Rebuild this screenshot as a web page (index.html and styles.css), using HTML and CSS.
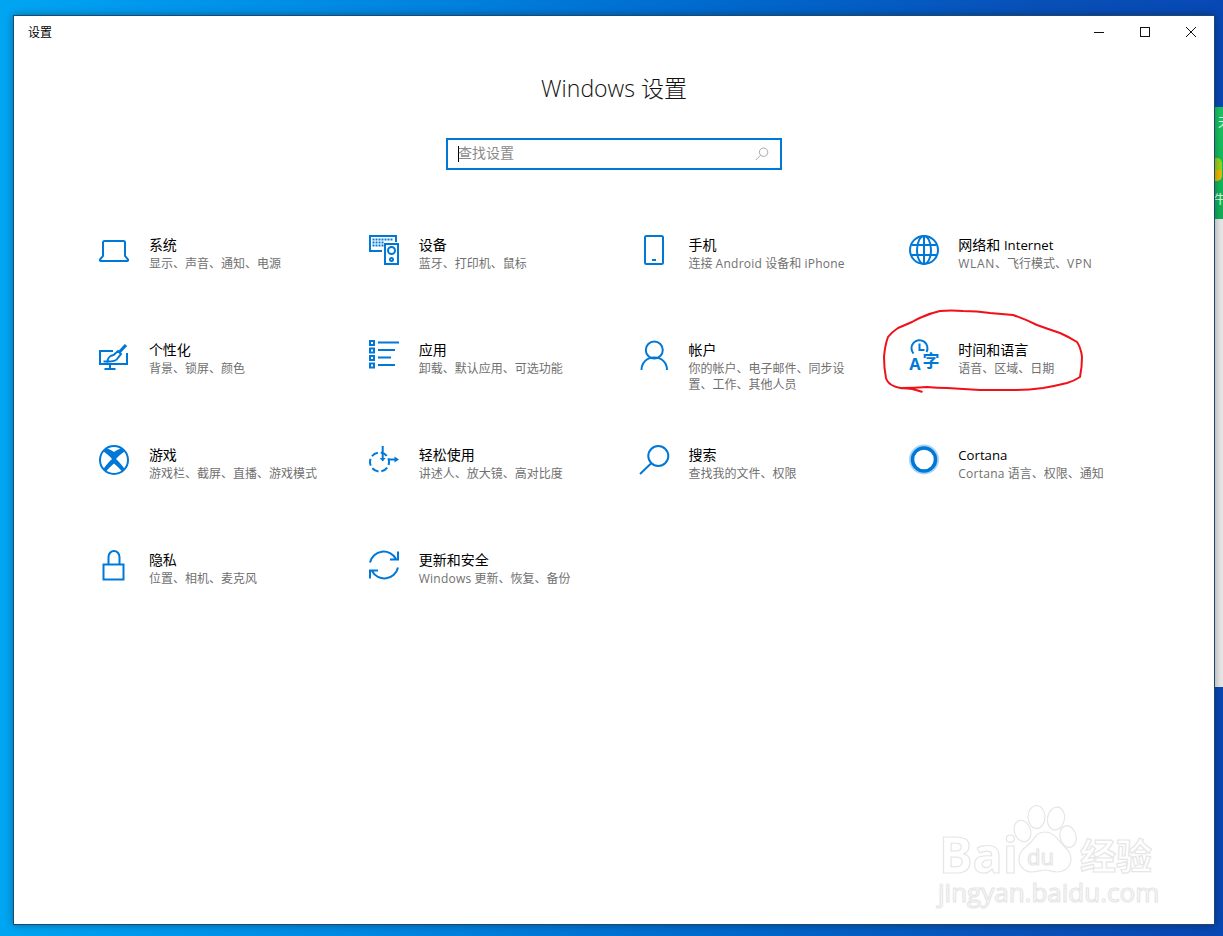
FILE: index.html
```html
<!DOCTYPE html>
<html lang="zh-CN">
<head>
<meta charset="utf-8">
<title>设置</title>
<link rel="stylesheet" href="styles.css">
</head>
<body>
<div class="desktop">
  <div class="side-app">
    <div class="side-green">
      <span class="side-a">天</span>
      <span class="side-pill"></span>
      <span class="side-b">牛</span>
    </div>
  </div>
  <main class="window">
    <header class="titlebar">
      <span class="app-name">设置</span>
      <div class="controls">
        <svg class="ctl" viewBox="0 0 46 32"><path d="M18 16.500h10"/></svg>
        <svg class="ctl" viewBox="0 0 46 32"><rect x="18.500" y="11.500" width="9" height="9"/></svg>
        <svg class="ctl" viewBox="0 0 46 32"><path d="M18 11l10 10M28 11l-10 10"/></svg>
      </div>
    </header>
    <h1 class="heading">Windows 设置</h1>
    <div class="search">
      <span class="caret"></span>
      <span class="placeholder">查找设置</span>
      <svg class="search-ico" viewBox="0 0 14 14"><circle cx="8.600" cy="5.200" r="4.200"/><path d="M5.600 8.200L.8 13"/></svg>
    </div>
    <section class="grid">
      <div class="item">
        <svg class="ico" viewBox="0 0 30 30"><path d="M4 21V7.500a1.500 1.500 0 0 1 1.500-1.500h19a1.500 1.500 0 0 1 1.500 1.500V21l3 3.500a1 1 0 0 1-.8 1.500H1.800a1 1 0 0 1-.8-1.500z"/></svg>
        <div class="txt"><div class="t">系统</div><div class="s">显示、声音、通知、电源</div></div>
      </div>
      <div class="item">
        <svg class="ico" viewBox="0 0 30 30"><path d="M13 16H1V1h26v6"/><path d="M3.500 4.500h21M3.500 7.500h11M3.500 10.500h11" stroke-dasharray="2 1"/><rect x="16" y="9" width="13" height="20"/><circle cx="22.500" cy="15.500" r="3.500"/><circle cx="22.500" cy="24.500" r="1.500"/></svg>
        <div class="txt"><div class="t">设备</div><div class="s">蓝牙、打印机、鼠标</div></div>
      </div>
      <div class="item">
        <svg class="ico" viewBox="0 0 30 30"><rect x="6" y="1" width="18" height="28" rx="1.500"/><path d="M13 25h4"/></svg>
        <div class="txt"><div class="t">手机</div><div class="s">连接 <span class="lat">Android</span> 设备和 <span class="lat">iPhone</span></div></div>
      </div>
      <div class="item">
        <svg class="ico" viewBox="0 0 30 30"><circle cx="15" cy="15" r="14"/><ellipse cx="15" cy="15" rx="7" ry="14"/><path d="M15 1v28M2.500 10h25M2.500 20h25"/></svg>
        <div class="txt"><div class="t">网络和 <span class="lat-t">Internet</span></div><div class="s"><span class="lat-w">WLAN</span>、飞行模式、<span class="lat-w">VPN</span></div></div>
      </div>

      <div class="item">
        <svg class="ico" viewBox="0 0 30 30"><path d="M14 11H1v13h27V13"/><path d="M11 25v4M5.500 29h11"/><path d="M4.500 21.500h5"/><path d="M8.500 21.500c0-3.500 3-6 6-6.500L19 11l3 3-3.500 4.500c-1 2.500-5 3-10 3z"/><path class="brush" d="M20.500 12L27 5"/></svg>
        <div class="txt"><div class="t">个性化</div><div class="s">背景、锁屏、颜色</div></div>
      </div>
      <div class="item">
        <svg class="ico" viewBox="0 0 30 30"><rect x="1" y="1" width="4" height="4"/><rect x="1" y="8.500" width="4" height="4"/><rect x="1" y="16" width="4" height="4"/><rect x="1" y="23.500" width="4" height="4"/><path d="M9 2.500h21M9 10h17M9 17.500h13M9 25h17"/></svg>
        <div class="txt"><div class="t">应用</div><div class="s">卸载、默认应用、可选功能</div></div>
      </div>
      <div class="item">
        <svg class="ico" viewBox="0 0 30 30"><circle cx="15.300" cy="10" r="8.500"/><path d="M2.500 30c0-7 5-12.500 12.800-12.500S28 23 28 30"/></svg>
        <div class="txt"><div class="t">帐户</div><div class="s">你的帐户、电子邮件、同步设置、工作、其他人员</div></div>
      </div>
      <div class="item">
        <svg class="ico" viewBox="0 0 30 30"><path d="M17.500 12A8 8 0 1 0 4.500 13.500"/><path d="M10.500 3.500v6.500h5"/><text class="ico-a" x=".3" y="29.800">A</text><text class="ico-zi" x="13.500" y="26.500">字</text></svg>
        <div class="txt"><div class="t">时间和语言</div><div class="s">语音、区域、日期</div></div>
      </div>

      <div class="item">
        <svg class="ico" viewBox="0 0 30 30"><circle cx="15" cy="15" r="14"/><path class="fill" d="M15 7C12.500 5 10 4 7.500 3.800L4.500 6.500C7 8 10.500 11 13 14 9.500 17.500 6 21 4.500 24L7 26.500C9 24 12 21 15 18.500 18 21 21 24 23 26.500L25.500 24C24 21 20.500 17.500 17 14 19.500 11 23 8 25.500 6.500L22.500 3.800C20 4 17.500 5 15 7z"/></svg>
        <div class="txt"><div class="t">游戏</div><div class="s">游戏栏、截屏、直播、游戏模式</div></div>
      </div>
      <div class="item">
        <svg class="ico" viewBox="0 0 30 30"><circle cx="10.500" cy="17" r="9.500" stroke-dasharray="7 2.950" stroke-dashoffset="4"/><path d="M13.700 1v12.500"/><path class="fill" d="M10.700 13h6l-3 3.500z"/><path d="M19 14.500h7"/><path class="fill" d="M25.500 11.500l4.500 3-4.500 3z"/></svg>
        <div class="txt"><div class="t">轻松使用</div><div class="s">讲述人、放大镜、高对比度</div></div>
      </div>
      <div class="item">
        <svg class="ico" viewBox="0 0 30 30"><circle cx="19.300" cy="11" r="10"/><path d="M12 18.500L1 29"/></svg>
        <div class="txt"><div class="t">搜索</div><div class="s">查找我的文件、权限</div></div>
      </div>
      <div class="item">
        <svg class="ico" viewBox="0 0 30 30"><circle class="glow" cx="15" cy="14.500" r="13.500"/><circle class="ring" cx="15" cy="14.500" r="11.500"/></svg>
        <div class="txt"><div class="t"><span class="lat-t">Cortana</span></div><div class="s"><span class="lat">Cortana</span> 语言、权限、通知</div></div>
      </div>

      <div class="item">
        <svg class="ico" viewBox="0 0 30 30"><rect x="4.500" y="14.500" width="20" height="15"/><path d="M9.500 14V7a5.500 6 0 0 1 11 0v7"/></svg>
        <div class="txt"><div class="t">隐私</div><div class="s">位置、相机、麦克风</div></div>
      </div>
      <div class="item">
        <svg class="ico" viewBox="0 0 30 30"><path d="M1 12.500A14 14 0 0 1 27 9M29 1.500V9.500H21"/><path d="M29 17.500A14 14 0 0 1 3 21M1 28.500V20.500H9"/></svg>
        <div class="txt"><div class="t">更新和安全</div><div class="s"><span class="lat">Windows</span> 更新、恢复、备份</div></div>
      </div>
    </section>
  </main>
  <svg class="overlay" viewBox="0 0 1223 936">
    <path class="red" d="M921.700 391.700Q911 388 901.700 388.300Q895 387 891.700 385Q887 382 886 378Q884 368 884 357Q885 345 888 337Q892 332 898 328Q905 325 912 322Q917 319 922 317Q931 313 940 311Q951 310 963 311Q977 311 990 313Q1002 314 1013 315Q1025 319 1037 325Q1048 329 1060 333Q1069 337 1077 342Q1081 348 1082 357Q1082 367 1080 377Q1074 381 1067 383Q1055 386 1043 388Q1028 390 1013 390Q997 390 980 390Q963 389 947 388Q937 388 927 387Q914 388 902 388"/>
    <g class="wm">
      <ellipse cx="1036.500" cy="817" rx="8.500" ry="11.500"/>
      <ellipse cx="1056" cy="818.500" rx="8.500" ry="11.500" transform="rotate(10 1056 818.500)"/>
      <ellipse cx="1022.500" cy="831" rx="8" ry="11" transform="rotate(-20 1022.500 831)"/>
      <ellipse cx="1068" cy="836.500" rx="8" ry="11" transform="rotate(-15 1068 836.500)"/>
      <path d="M1045 832c8 0 12 6 16 11s10 8 10 16c0 9-8 13-14 13-5 0-8-2-12-2s-8 2-13 2c-7 0-13-5-13-13 0-8 6-11 11-16s7-11 15-11z"/>
      <text class="wm-bai" x="939" y="873">Bai</text>
      <text class="wm-du" x="1027" y="865">du</text>
      <text class="wm-jy" x="1080" y="870">经验</text>
      <text class="wm-url" x="938" y="902">jingyan.baidu.com</text>
    </g>
  </svg>
</div>
</body>
</html>
```

FILE: styles.css
```css
* { box-sizing: border-box; }
html, body { margin: 0; padding: 0; }
body {
  font-family: "Open Sans", "Noto Sans CJK SC", sans-serif;
  overflow: hidden;
}
.desktop {
  position: relative;
  width: 1223px;
  height: 936px;
  padding: 15px 8px 11px 13px;
  background: linear-gradient(90deg, #00a6f2 0, #0098ee 12%, #0088e2 30%, #0068cc 60%, #0850b8 85%, #0848b4 100%);
  overflow: hidden;
}
.side-app {
  position: absolute;
  left: 1200px;
  top: 107px;
  width: 23px;
  height: 580px;
  background: #e9e9e9;
}
.side-green {
  position: relative;
  width: 23px;
  height: 112px;
  background: linear-gradient(180deg, #1bc562, #0fb05a);
  overflow: hidden;
}
.side-a, .side-b {
  position: absolute;
  left: 18px;
  font-size: 12px;
  line-height: 14px;
  color: #e8fff0;
}
.side-a { top: 9px; }
.side-b { top: 86px; left: 14px; }
.side-pill {
  position: absolute;
  left: 12px;
  top: 51px;
  width: 10px;
  height: 23px;
  border-radius: 0 5px 5px 0;
  background: linear-gradient(180deg, #9ad41c 0, #9ad41c 50%, #e8bc00 50%, #e8bc00 100%);
}
.window {
  position: relative;
  width: 1202px;
  height: 910px;
  background: #fff;
  border: 1px solid #1d4a6c;
  box-shadow: 0 0 8px rgba(0, 0, 0, .35);
}
.titlebar {
  display: flex;
  justify-content: space-between;
  height: 32px;
}
.app-name {
  padding-left: 14px;
  font-size: 12px;
  line-height: 33px;
  color: #000;
}
.controls { display: flex; }
.ctl {
  display: block;
  width: 46px;
  height: 32px;
  fill: none;
  stroke: #111;
  stroke-width: 1;
}
.heading {
  margin: 24px 0 0;
  height: 32px;
  text-align: center;
  font-size: 23px;
  line-height: 32px;
  font-weight: 300;
  color: #111;
}
.search {
  display: flex;
  align-items: center;
  width: 336px;
  height: 32px;
  margin: 34px auto 0;
  padding: 0 11px 0 10px;
  border: 2px solid #0078d7;
}
.caret {
  width: 1px;
  height: 16px;
  margin-right: -1px;
  background: #000;
}
.placeholder {
  flex: 1;
  padding-bottom: 4px;
  font-size: 14px;
  color: #8a8a8a;
}
.search-ico {
  width: 14px;
  height: 14px;
  fill: none;
  stroke: #a8a8a8;
  stroke-width: 1;
}
.grid {
  display: grid;
  grid-template-columns: repeat(4, 269.800px);
  grid-auto-rows: 105px;
  margin-top: 65px;
  padding-left: 85.200px;
}
.item {
  display: flex;
  gap: 19.700px;
}
.ico {
  flex: none;
  width: 30px;
  height: 30px;
  fill: none;
  stroke: #0078d7;
  stroke-width: 2;
  overflow: visible;
}
.ico .fill { fill: #0078d7; stroke: none; }
.ico .brush { stroke-width: 3.200; }
.ico .glow { stroke: #a9d2f1; stroke-width: 3; }
.ico .ring { stroke-width: 3.500; }
.ico-a, .ico-zi {
  fill: #0078d7;
  stroke: none;
}
.ico-a { font-size: 16.500px; font-weight: 700; font-family: "Open Sans", sans-serif; }
.ico-zi { font-size: 17px; font-weight: 700; font-family: "Noto Sans CJK SC", sans-serif; }
.txt { width: 170px; }
.t {
  font-size: 14px;
  line-height: 20px;
  color: #000;
  white-space: nowrap;
}
.lat-t { font-size: 13.200px; }
.s {
  margin-top: 1px;
  font-size: 12px;
  line-height: 16px;
  color: #707070;
}
.lat { letter-spacing: .25px; }
.lat-w { letter-spacing: .7px; }
.overlay {
  position: absolute;
  left: 0;
  top: 0;
  width: 1223px;
  height: 936px;
  pointer-events: none;
}
.red {
  fill: none;
  stroke: #f0101a;
  stroke-width: 2;
  stroke-linecap: round;
  stroke-linejoin: round;
}
.wm {
  fill: #fff;
  stroke: #e6e6e6;
  stroke-width: 1.200;
}
.wm-bai { font-size: 50px; font-family: "Open Sans", sans-serif; font-weight: 700; }
.wm-du { font-size: 22px; font-family: "Open Sans", sans-serif; }
.wm-jy { font-size: 36px; font-family: "Noto Sans CJK SC", sans-serif; font-weight: 700; }
.wm-url { font-size: 26px; font-family: "Open Sans", sans-serif; }
```
